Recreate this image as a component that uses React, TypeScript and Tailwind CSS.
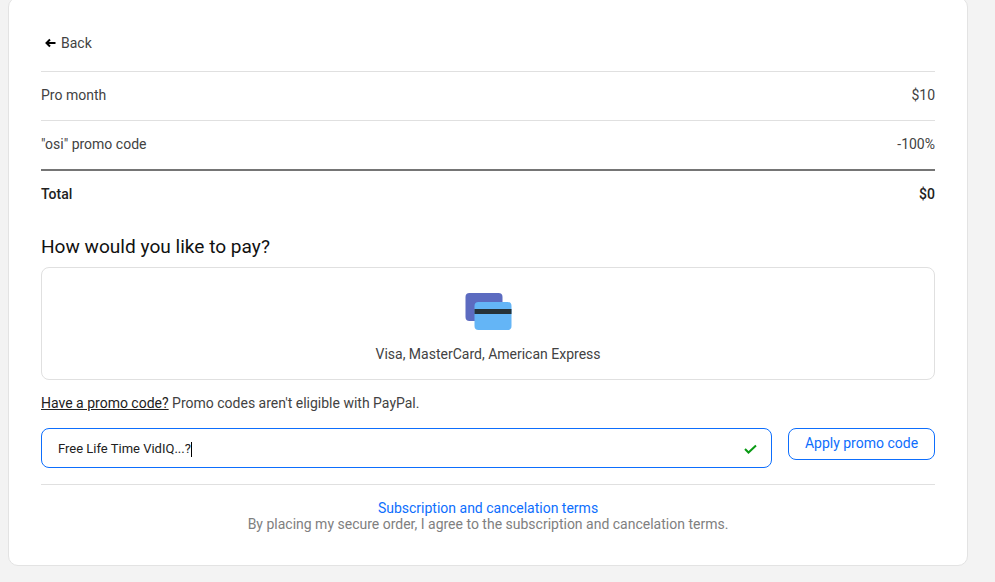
import React from 'react';

const CardsIcon = () => (
  <svg width="48" height="38" viewBox="0 0 48 38" fill="none">
    <rect x="0.5" y="0" width="37" height="28" rx="4" fill="#5c6bc0" />
    <rect x="9.5" y="9" width="37" height="28" rx="4" fill="#64b5f6" />
    <rect x="9.5" y="16" width="37" height="5" fill="#263238" />
  </svg>
);

export default function App() {
  return (
    <main className="h-[582px] w-[995px] overflow-hidden bg-[#f3f3f3] font-['Roboto',sans-serif] text-sm text-[#212121]">
      <div className="ml-2 -mt-[3px] h-[569px] w-[960px] rounded-[10px] border border-[#e3e3e3] bg-white px-8">
        {/* Back link */}
        <div className="flex h-[74px] items-center gap-[5px] border-b border-[#e0e0e0] pt-4 pl-1 text-[#424242]">
          <svg width="11" height="10" viewBox="0 0 11 10" fill="none">
            <path d="M5 1.5 1.5 5 5 8.5M1.5 5H10.5" stroke="#000" strokeWidth="2" />
          </svg>
          <span>Back</span>
        </div>

        {/* Order summary */}
        <div className="flex h-[49px] items-center justify-between border-b border-[#e0e0e0] pb-[2px] text-[#424242]">
          <span>Pro month</span>
          <span>$10</span>
        </div>
        <div className="flex h-[50px] items-center justify-between border-b-2 border-[#757575] pb-[2px] text-[#424242]">
          <span>"osi" promo code</span>
          <span>-100%</span>
        </div>
        <div className="flex h-[48px] items-center justify-between pb-[2px] font-medium">
          <span>Total</span>
          <span>$0</span>
        </div>

        <h2 className="mt-[15px] text-[19.1px] leading-[26px] font-normal text-[#111]">How would you like to pay?</h2>

        {/* Payment method */}
        <div className="mt-[7px] flex h-[113px] flex-col items-center rounded-lg border border-[#e0e0e0] pt-[25px] pl-[2px] text-[#424242]">
          <CardsIcon />
          <span className="mt-[13px] -ml-[2px] leading-5">Visa, MasterCard, American Express</span>
        </div>

        <p className="mt-[13px] leading-5 text-[#424242]">
          <span className="text-[#212121] underline">Have a promo code?</span> Promo codes aren't eligible with PayPal.
        </p>

        {/* Promo form */}
        <div className="mt-[15px] flex items-start gap-4">
          <div className="flex h-10 w-[731px] items-center justify-between rounded-lg border border-[#0d6efd] pt-[2px] pr-[14px] pl-4 text-[13px]">
            <span className="flex items-center">
              Free Life Time VidIQ...?
              <span className="h-[15px] w-px bg-black" />
            </span>
            <svg width="13" height="10" viewBox="0 0 13 10" fill="none">
              <path d="M1 5 4.5 8.5 12 1.5" stroke="#0a9a14" strokeWidth="2" />
            </svg>
          </div>
          <button className="h-8 w-[147px] rounded-lg border border-[#0d6efd] pb-[2px] text-[#0d6efd]">Apply promo code</button>
        </div>

        <hr className="mt-4 border-[#e0e0e0]" />

        <div className="mt-[15px] text-center leading-4">
          <a className="block text-[#0d6efd]">Subscription and cancelation terms</a>
          <span className="text-[#808080]">By placing my secure order, I agree to the subscription and cancelation terms.</span>
        </div>
      </div>
    </main>
  );
}
